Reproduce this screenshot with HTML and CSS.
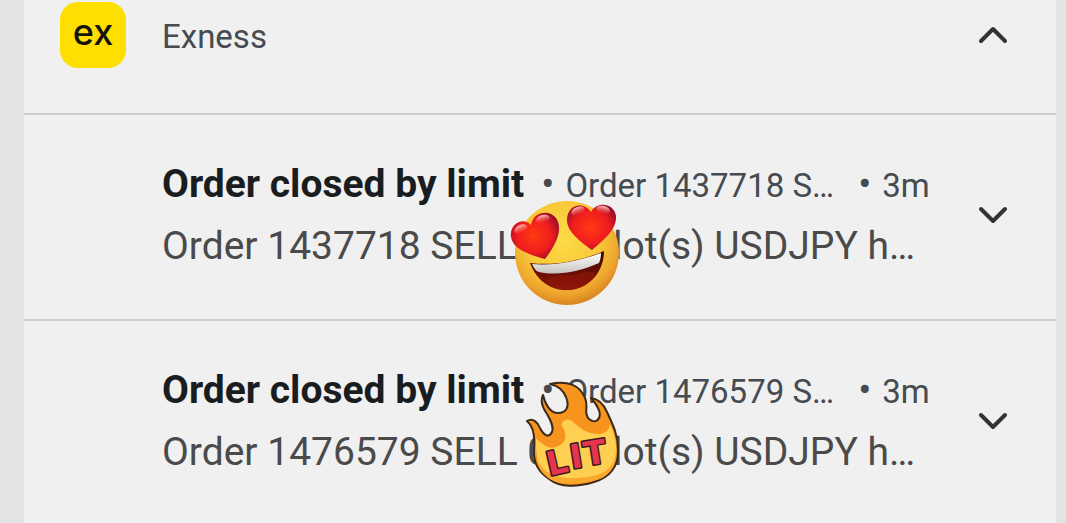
FILE: index.html
```html
<!DOCTYPE html>
<html lang="en">
<head>
    <meta charset="UTF-8">
    <meta name="viewport" content="width=device-width, initial-scale=1.0">
    <title>Exness notifications</title>
    <link rel="stylesheet" href="styles.css">
</head>
<body>
    <main class="card">
        <header class="app">
            <svg class="app-icon" viewBox="0 0 66 66" role="img" aria-label="Exness logo">
                <rect width="66" height="66" rx="18" fill="#ffde02"/>
                <text x="33" y="43" text-anchor="middle" class="logo-text">ex</text>
            </svg>
            <h1 class="app-name">Exness</h1>
            <button class="toggle" type="button" aria-label="Collapse">
                <svg class="chevron" viewBox="0 0 32 20"><path d="M4 16 16 4 28 16"/></svg>
            </button>
        </header>

        <article class="notice">
            <div class="notice-text">
                <div class="headline">
                    <h2 class="title">Order closed by limit</h2>
                    <span class="dot">•</span>
                    <span class="meta">Order 1437718 S…</span>
                    <span class="dot wide">•</span>
                    <span class="meta">3m</span>
                </div>
                <p class="message">Order 1437718 SELL 0.01 lot(s) USDJPY h…</p>
            </div>
            <button class="toggle" type="button" aria-label="Expand">
                <svg class="chevron" viewBox="0 0 32 20"><path d="M4 4 16 16 28 4"/></svg>
            </button>
            <!-- heart eyes sticker -->
            <svg class="sticker love" viewBox="0 0 112 108" aria-hidden="true">
                <defs>
                    <radialGradient id="face" cx="0.46" cy="0.36" r="0.64">
                        <stop offset="0" stop-color="#fddb48"/>
                        <stop offset="0.55" stop-color="#f9c838"/>
                        <stop offset="0.84" stop-color="#eda52e"/>
                        <stop offset="1" stop-color="#d98522"/>
                    </radialGradient>
                    <radialGradient id="heart" cx="0.48" cy="0.5" r="0.6">
                        <stop offset="0" stop-color="#ff3a12"/>
                        <stop offset="0.6" stop-color="#f01d1e"/>
                        <stop offset="1" stop-color="#960c2c"/>
                    </radialGradient>
                    <linearGradient id="mouth" x1="0" y1="0" x2="0" y2="1">
                        <stop offset="0" stop-color="#3c0502"/>
                        <stop offset="1" stop-color="#8f1606"/>
                    </linearGradient>
                    <linearGradient id="teeth" x1="0" y1="0" x2="0" y2="1">
                        <stop offset="0" stop-color="#ffffff"/>
                        <stop offset="1" stop-color="#c4c3c0"/>
                    </linearGradient>
                    <linearGradient id="shine" x1="0" y1="0" x2="0" y2="1">
                        <stop offset="0" stop-color="#ffc2bd"/>
                        <stop offset="1" stop-color="#ff5a50" stop-opacity="0"/>
                    </linearGradient>
                </defs>
                <circle cx="58" cy="54" r="52" fill="url(#face)"/>
                <path d="M21 64C45 67 72 62 95 52C95 73 80 90 60 91C40 92 27 80 21 64Z" fill="url(#mouth)"/>
                <path d="M36 82C48 72 62 80 72 74C80 71 84 73 87 75C80 85 71 90 60 91C50 92 41 88 36 82Z" fill="#8d1608" opacity="0.6"/>
                <path d="M23 65C46 67 70 62 92 54C92 58 91 62 90 64C70 73 48 77 30 73Q26 72 23 65Z" fill="url(#teeth)"/>
                <path d="M36 60C22 56 4 51 2 38C0 25 14 17 22 26C24 13 40 10 47 19C55 31 46 47 36 60Z" fill="url(#heart)"/>
                <path d="M83 51C72 43 58 33 58 21C58 5 75 2 82 13C88 2 105 4 107 17C108 30 95 41 83 51Z" fill="url(#heart)"/>
                <ellipse cx="12" cy="30" rx="7" ry="4" transform="rotate(-24 12 30)" fill="url(#shine)"/>
                <ellipse cx="34" cy="20" rx="7" ry="4" transform="rotate(-14 34 20)" fill="url(#shine)"/>
                <ellipse cx="69" cy="12" rx="7" ry="4" transform="rotate(-22 69 12)" fill="url(#shine)"/>
                <ellipse cx="94" cy="11" rx="7" ry="4" transform="rotate(12 94 11)" fill="url(#shine)"/>
            </svg>
        </article>

        <article class="notice">
            <div class="notice-text">
                <div class="headline">
                    <h2 class="title">Order closed by limit</h2>
                    <span class="dot">•</span>
                    <span class="meta">Order 1476579 S…</span>
                    <span class="dot wide">•</span>
                    <span class="meta">3m</span>
                </div>
                <p class="message">Order 1476579 SELL 0.01 lot(s) USDJPY h…</p>
            </div>
            <button class="toggle" type="button" aria-label="Expand">
                <svg class="chevron" viewBox="0 0 32 20"><path d="M4 4 16 16 28 4"/></svg>
            </button>
            <!-- flame sticker -->
            <svg class="sticker lit" viewBox="0 0 98 108">
                <path d="M2 41C8 37 13 43 15 48C19 56 24 58 27 52C29 47 26 41 22 34C17 27 15 21 18 15C20 24 25 33 33 33C41 33 45 27 41 17C38 10 34 6 25 4C42 0 55 5 60 18C64 27 58 33 64 39C71 45 78 38 73 28C71 24 69 21 66 18C74 19 79 25 82 32C87 43 93 54 93 69C94 87 84 98 69 102C53 107 35 108 24 99C14 92 8 84 9 68C10 56 8 46 2 41Z" fill="#f7941d" stroke="#3b2a18" stroke-width="2" stroke-linejoin="round"/>
                <path d="M11 58C15 62 22 70 31 67C41 64 43 55 37 46C36 41 42 38 47 41C54 47 58 51 66 53C76 56 84 53 85 44C90 55 93 68 90 79C87 92 76 98 62 101C44 105 29 104 20 94C13 86 11 78 11 58Z" fill="#ffcf52"/>
                <path d="M12 79C21 101 48 100 67 96C80 94 88 87 91 74C91 89 82 98 68 101C50 105 31 105 22 97C16 92 13 87 12 79Z" fill="#f9a72d"/>
                <g class="lit-text">
                    <text x="32" y="94" text-anchor="middle" transform="rotate(-13 32 83)">L</text>
                    <text x="51" y="88" text-anchor="middle" transform="rotate(-9 51 77)">I</text>
                    <text x="70" y="84" text-anchor="middle" transform="rotate(-9 70 73)">T</text>
                </g>
            </svg>
        </article>
    </main>
</body>
</html>
```
FILE: styles.css
```css
* {
    box-sizing: border-box;
}
body {
    margin: 0;
    background: #e3e3e3;
    font-family: Roboto, "Liberation Sans", sans-serif;
    color: #454b50;
}
h1, h2, p {
    margin: 0;
    font-weight: 400;
}
.card {
    min-height: 100vh;
    margin: 0 10px 0 24px;
    background: #f0f0f0;
}
.app {
    display: flex;
    align-items: center;
    padding: 2px 39px 45px 36px;
}
.app-icon {
    width: 66px;
    height: 66px;
    margin-right: 36px;
}
.logo-text {
    font-family: Inter, sans-serif;
    font-size: 36px;
    font-weight: 500;
    fill: #14140c;
}
.app-name {
    flex: 1;
    padding-top: 4px;
    font-size: 33px;
    line-height: 40px;
}
.notice {
    position: relative;
    display: flex;
    align-items: center;
    padding: 38px 39px 42px 138px;
    border-top: 2px solid #cdcfce;
}
.notice-text {
    flex: 1;
    min-width: 0;
    white-space: nowrap;
}
.headline {
    display: flex;
    align-items: baseline;
    line-height: 40px;
}
.title {
    font-size: 39px;
    line-height: 62px;
    font-weight: 700;
    color: #191d20;
}
.meta {
    font-size: 33px;
}
.dot {
    margin: 0 11px 0 17px;
    font-size: 39px;
}
.wide {
    margin-left: 24px;
}
.message {
    font-size: 39px;
    line-height: 62px;
    color: #4a4a4a;
}
.toggle {
    display: flex;
    justify-content: center;
    align-items: center;
    width: 48px;
    height: 48px;
    padding: 0;
    border: 0;
    background: none;
    cursor: pointer;
}
.chevron {
    width: 32px;
    height: 20px;
    fill: none;
    stroke: #333;
    stroke-width: 4;
    stroke-linecap: round;
    stroke-linejoin: round;
}
/* stickers sit on top of the text */
.sticker {
    position: absolute;
}
.love {
    top: 84px;
    left: 485px;
    width: 112px;
    height: 108px;
}
.lit {
    top: 59px;
    left: 501px;
    width: 98px;
    height: 108px;
}
.lit-text {
    font-family: "DejaVu Sans", sans-serif;
    font-size: 33px;
    font-weight: 700;
    fill: #e5344f;
    stroke: #3b1a1c;
    stroke-width: 3;
    stroke-linejoin: round;
    paint-order: stroke;
}
```
